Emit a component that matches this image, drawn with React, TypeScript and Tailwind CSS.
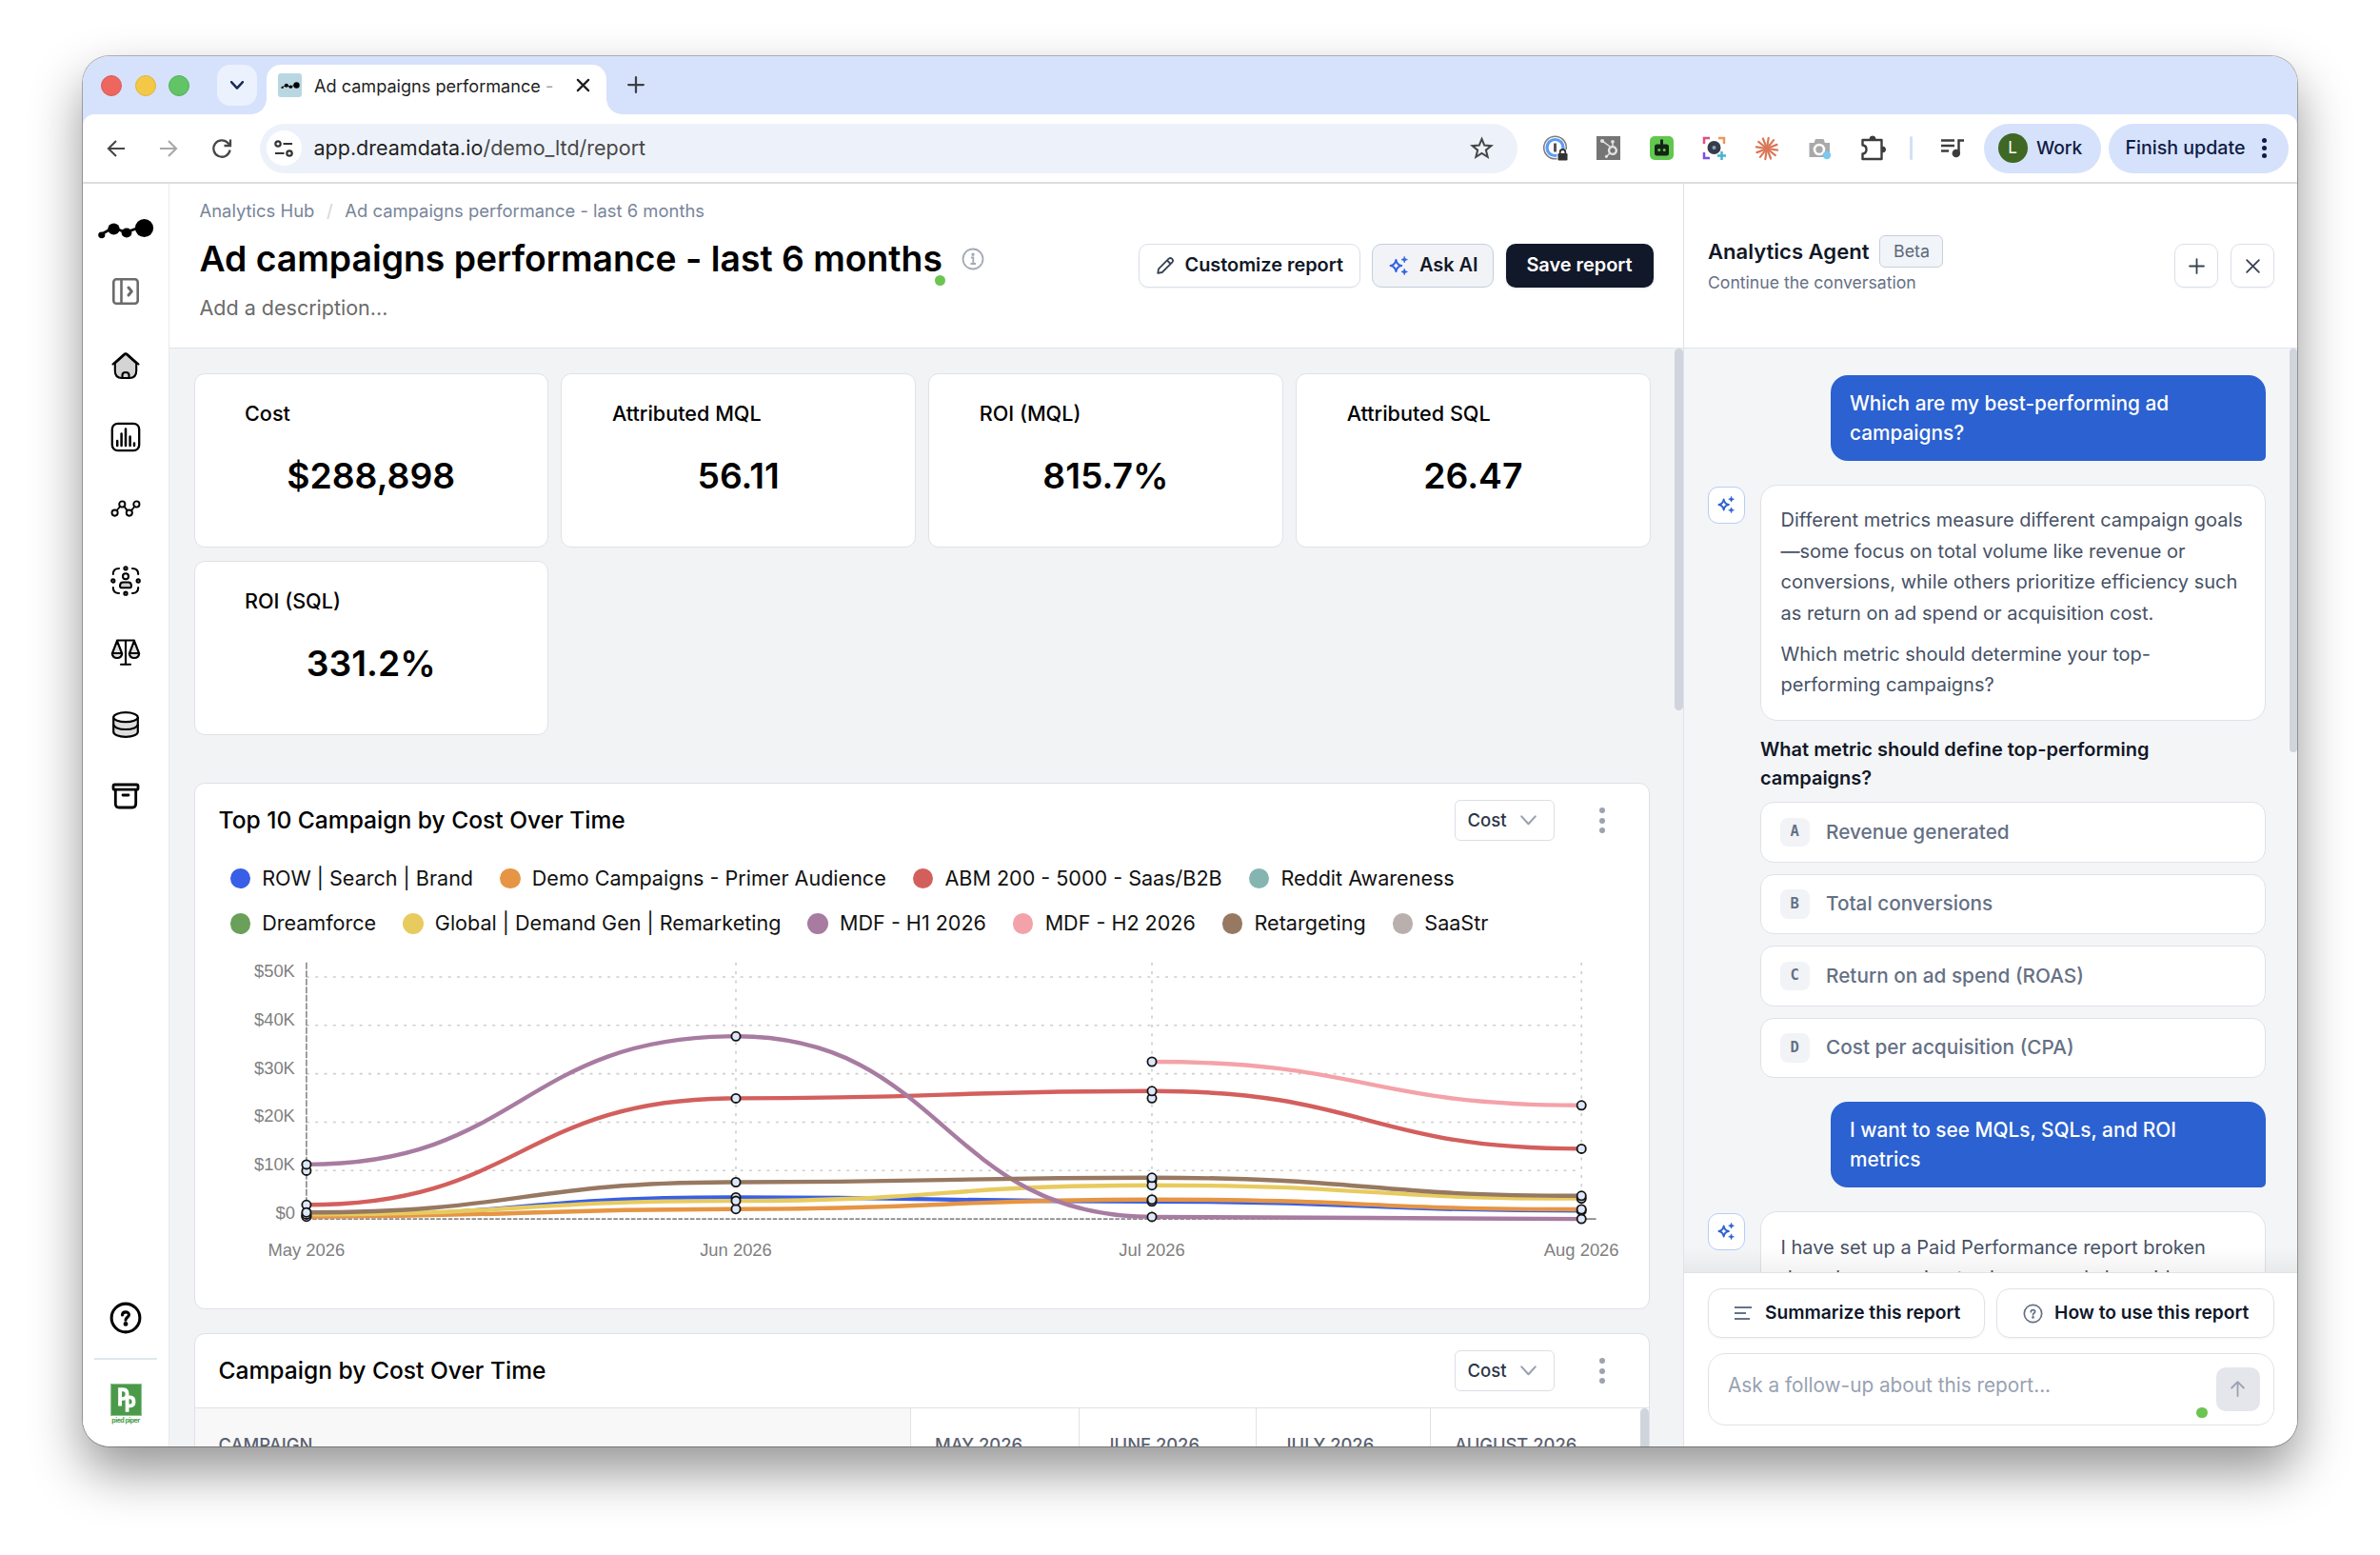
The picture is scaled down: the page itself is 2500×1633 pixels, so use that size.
import React from "react";
import { FaHubspot } from "react-icons/fa";

/* ---------- icons ---------- */
function Sparkles({ size, color }: { size: number; color: string }) {
  return (
    <svg width={size} height={size} viewBox="0 0 20 20" fill="none">
      <path d="M7.4 3.9C8 7.6 9.7 9.4 13.2 10C9.7 10.6 8 12.4 7.4 16.1C6.8 12.4 5.1 10.6 1.6 10C5.1 9.4 6.8 7.6 7.4 3.9Z" stroke={color} strokeWidth="2" strokeLinejoin="round" />
      <path d="M16.2 .4C16.6 2.4 17.4 3.2 19.4 3.6C17.4 4 16.6 4.8 16.2 6.8C15.8 4.8 15 4 13 3.6C15 3.2 15.8 2.4 16.2 .4Z" fill={color} stroke={color} strokeWidth=".8" />
      <path d="M16.2 13.2C16.6 15.2 17.4 16 19.4 16.4C17.4 16.8 16.6 17.6 16.2 19.6C15.8 17.6 15 16.8 13 16.4C15 16 15.8 15.2 16.2 13.2Z" fill={color} stroke={color} strokeWidth=".8" />
    </svg>
  );
}

function DreamLogo({ w }: { w: number }) {
  return (
    <svg width={w} height={(w * 24) / 60} viewBox="0 0 60 24" fill="#000">
      <path d="M4.5 17L17 10L30 15L47 9" stroke="#000" strokeWidth="2.6" fill="none" />
      <ellipse cx="4.8" cy="17.8" rx="3.6" ry="3.4" />
      <ellipse cx="17.5" cy="11.5" rx="6.2" ry="6" />
      <ellipse cx="31" cy="15.5" rx="5.4" ry="4.9" />
      <ellipse cx="49.5" cy="10.5" rx="9.6" ry="9.6" />
    </svg>
  );
}

function PanelIcon() {
  return (
    <svg width="30" height="30" viewBox="0 0 30 30" fill="none" stroke="#6b6b6b" strokeWidth="2.6">
      <rect x="2.3" y="2.3" width="25.4" height="25.4" rx="3" />
      <path d="M10.5 2.5V27.5" />
      <path d="M18 11L21.3 15L18 19" strokeWidth="3" strokeLinecap="round" strokeLinejoin="round" />
    </svg>
  );
}
function HomeIcon() {
  return (
    <svg width="30" height="30" viewBox="0 0 30 30" fill="none" stroke="#000" strokeWidth="2.1" strokeLinecap="round" strokeLinejoin="round">
      <path d="M3.8 12.5V20.5Q3.8 28 11 28H19Q26.2 28 26.2 20.5V12.5L15 2.5Z" fill="#d4d4d4" />
      <path d="M1.5 13.5L13.2 3Q15 1.6 16.8 3L28.5 13.5" />
      <path d="M11.5 28V24.8Q11.5 22 15 22T18.5 24.8V28" />
    </svg>
  );
}
function BarsIcon() {
  return (
    <svg width="32" height="32" viewBox="0 0 32 32" fill="none" stroke="#000" strokeWidth="2.3" strokeLinecap="round">
      <rect x="1.8" y="1.8" width="28.4" height="28.4" rx="6" />
      <path d="M7.2 20V25M11.6 12.5V25M16 7.5V25M20.6 15.5V25M25 22.5V25" strokeWidth="2.5" />
    </svg>
  );
}
function PathIcon() {
  return (
    <svg width="32" height="20" viewBox="0 0 32 20" fill="#eee" stroke="#000" strokeWidth="1.9">
      <path d="M4.5 14.5L12.3 5.5L19.8 14.5L27.5 5.5" fill="none" />
      <circle cx="4.6" cy="14.6" r="3.1" />
      <circle cx="12.3" cy="5.5" r="3.1" />
      <circle cx="19.8" cy="14.6" r="3.1" />
      <circle cx="27.4" cy="5.5" r="3.1" />
    </svg>
  );
}
function AudienceIcon() {
  return (
    <svg width="32" height="32" viewBox="0 0 32 32" fill="none" stroke="#000" strokeWidth="2.1" strokeLinecap="round">
      <path d="M2.8 9Q2.8 3 9 3M23 3Q29.2 3 29.2 9M29.2 23Q29.2 29 23 29M9 29Q2.8 29 2.8 23" />
      <circle cx="16" cy="2.8" r="1.6" />
      <circle cx="16" cy="29.2" r="1.6" />
      <circle cx="2.8" cy="16" r="1.6" />
      <circle cx="29.2" cy="16" r="1.6" />
      <circle cx="16" cy="11.3" r="3" />
      <path d="M10 21Q10.3 17.5 13 17.5H19Q21.7 17.5 22 21Q22 23.3 20 23.3H12Q10 23.3 10 21Z" fill="#d0d0d0" />
    </svg>
  );
}
function ScalesIcon() {
  return (
    <svg width="32" height="30" viewBox="0 0 32 30" fill="none" stroke="#000" strokeWidth="2.1" strokeLinecap="round" strokeLinejoin="round">
      <path d="M7 3L1.8 16.5Q2.5 21 7 21T12.2 16.5L7 3ZM25 3L19.8 16.5Q20.5 21 25 21T30.2 16.5L25 3Z" fill="#dedede" />
      <path d="M7 2.5H25M16 2.5V27.5M11 27.8H21M2 16H12M20 16H30" />
    </svg>
  );
}
function DbIcon() {
  return (
    <svg width="30" height="30" viewBox="0 0 30 30" fill="#dedede" stroke="#000" strokeWidth="2.2">
      <path d="M2.2 7V22.5C2.2 25.5 7.5 27.8 15 27.8S27.8 25.5 27.8 22.5V7" />
      <path d="M2.2 14.8C2.2 17.5 7.5 20 15 20S27.8 17.5 27.8 14.8" fill="none" />
      <ellipse cx="15" cy="7.2" rx="12.8" ry="5" fill="#fff" />
    </svg>
  );
}
function ArchiveIcon() {
  return (
    <svg width="30" height="28" viewBox="0 0 30 28" fill="none" stroke="#000" strokeWidth="2.8" strokeLinecap="round" strokeLinejoin="round">
      <rect x="2" y="2" width="26" height="5.2" rx="1.5" />
      <path d="M4.3 7.5V22Q4.3 26 8 26H22Q25.7 26 25.7 22V7.5M12 13H18" />
    </svg>
  );
}
function HelpIcon({ size, color, sw }: { size: number; color: string; sw: number }) {
  return (
    <svg width={size} height={size} viewBox="0 0 32 32" fill="none" stroke={color} strokeWidth={sw} strokeLinecap="round">
      <circle cx="16" cy="16" r="14" />
      <path d="M12.7 13.2C12.7 11.2 14.2 10.2 16 10.2S19.3 11.3 19.3 13C19.3 15.2 16 15.4 16 18" />
      <circle cx="16" cy="22" r={sw * 0.3} fill={color} />
    </svg>
  );
}
function PiedPiper() {
  return (
    <div className="flex flex-col items-center">
      <div className="flex h-[34px] w-[33px] items-center justify-center border border-[#8fc08f] bg-[#4a9a4a]">
        <svg width="29" height="30" viewBox="0 0 27 28" fill="none" stroke="#fff" strokeWidth="3.6">
          <path d="M7.5 20V4H10.5Q14.5 4 14.5 8.5T10.5 13H8" />
          <path d="M14.5 26V11.5H17.5Q21 11.5 21 15.8T17.5 20H15" />
        </svg>
      </div>
      <span className="whitespace-nowrap text-[7px] font-bold leading-[9px] tracking-[-0.5px] text-[#4a9a4a]">pied piper</span>
    </div>
  );
}
function ChevronV({ w, color, sw }: { w: number; color: string; sw: number }) {
  return (
    <svg width={w} height={(w * 10) / 16} viewBox="0 0 16 10" fill="none" stroke={color} strokeWidth={sw} strokeLinecap="round" strokeLinejoin="round">
      <path d="M1.2 1.3L8 8.7L14.8 1.3" />
    </svg>
  );
}
function CrossIcon({ size, color, sw }: { size: number; color: string; sw: number }) {
  return (
    <svg width={size} height={size} viewBox="0 0 16 16" stroke={color} strokeWidth={sw} strokeLinecap="round">
      <path d="M2 2L14 14M14 2L2 14" />
    </svg>
  );
}
function PlusIcon({ size, color, sw }: { size: number; color: string; sw: number }) {
  return (
    <svg width={size} height={size} viewBox="0 0 16 16" stroke={color} strokeWidth={sw} strokeLinecap="round">
      <path d="M8 1V15M1 8H15" />
    </svg>
  );
}

/* ---------- browser chrome ---------- */
function TabStrip() {
  return (
    <div className="flex h-[61px] items-start bg-[#d6e2fb]">
      <div className="flex h-[61px] w-[141px] items-center gap-[13.5px] pl-[19px] pt-[1px]">
        <span className="size-[22px] rounded-full border border-[#dc5a55] bg-[#ee6660]" />
        <span className="size-[22px] rounded-full border border-[#e0b43c] bg-[#f3c846]" />
        <span className="size-[22px] rounded-full border border-[#50b153] bg-[#62c466]" />
      </div>
      <div className="mt-[9px] flex h-[43px] w-[42px] items-center justify-center rounded-[14px] bg-[#ebf2fe]">
        <ChevronV w={14} color="#1b2a55" sw={2.8} />
      </div>
      <div className="relative ml-[10px] mt-[9px] flex h-[52px] w-[357px] items-center rounded-t-[15px] bg-white pb-[9px] pl-[12px] before:absolute before:-left-4 before:bottom-0 before:size-4 before:bg-[radial-gradient(circle_at_0_0,transparent_15.5px,#fff_16px)] after:absolute after:-right-4 after:bottom-0 after:size-4 after:bg-[radial-gradient(circle_at_100%_0,transparent_15.5px,#fff_16px)]">
        <span className="flex size-[25px] items-center justify-center rounded-[3px] bg-[#b9d7e2]">
          <DreamLogo w={20} />
        </span>
        <span className="ml-[13px] mt-[2px] w-[254px] whitespace-nowrap text-[18.1px] leading-none text-[#1f1f1f]">
          Ad campaigns performance <span className="text-[#a0a0a0]">-</span>
        </span>
        <span className="ml-[21px]">
          <CrossIcon size={15} color="#1f1f1f" sw={2.4} />
        </span>
      </div>
      <div className="ml-[22px] mt-[21px]">
        <PlusIcon size={18} color="#3c4043" sw={2} />
      </div>
    </div>
  );
}

function Extensions() {
  const rays = Array.from({ length: 12 }, (_, i) => (i * Math.PI) / 6 + 0.15);
  return (
    <div className="flex items-center">
      <span className="flex w-[55.5px] justify-center">
        <svg width="27" height="27" viewBox="0 0 27 27" fill="none">
          <circle cx="12.5" cy="13" r="11.8" stroke="#7d7d7d" strokeWidth="1.6" />
          <circle cx="12.5" cy="13" r="8.5" stroke="#5a9cf8" strokeWidth="3.2" />
          <path d="M12.5 8.5V17.5" stroke="#555" strokeWidth="3" />
          <path d="M14.5 27V15H27V27Z" fill="#fff" />
          <rect x="15.5" y="19" width="10" height="7.5" rx="1.2" fill="#333" />
          <path d="M17.7 19V17.8A2.8 2.8 0 0 1 23.3 17.8V19" stroke="#333" strokeWidth="1.8" />
        </svg>
      </span>
      <span className="flex w-[55.5px] justify-center">
        <span className="flex size-[25px] items-center justify-center bg-[#757575] text-[20px] text-[#e2e2e2]">
          <FaHubspot />
        </span>
      </span>
      <span className="flex w-[55.5px] justify-center">
        <svg width="25" height="25" viewBox="0 0 25 25">
          <rect width="25" height="25" rx="5" fill="#62c74f" />
          <rect x="11" y="3.5" width="3" height="6" fill="#152415" />
          <rect x="5" y="8.5" width="15" height="12" rx="2.5" fill="#152415" />
          <circle cx="9.8" cy="14.5" r="1.5" fill="#62c74f" />
          <circle cx="15.2" cy="14.5" r="1.5" fill="#62c74f" />
        </svg>
      </span>
      <span className="flex w-[55.5px] justify-center">
        <svg width="25" height="25" viewBox="0 0 25 25" fill="none" strokeWidth="2.5">
          <path d="M2 8V2H8" stroke="#e0507c" />
          <path d="M17 2H23V8" stroke="#f0945a" />
          <path d="M2 17V23H8" stroke="#7b4fe0" />
          <path d="M20.5 16V25M16 20.5H25" stroke="#45b4cf" />
          <circle cx="12.5" cy="12" r="7" fill="#363d4a" />
          <circle cx="12.5" cy="12" r="2" fill="#8ea3b8" />
        </svg>
      </span>
      <span className="flex w-[55.5px] justify-center">
        <svg width="26" height="26" viewBox="0 0 26 26" stroke="#d97757" strokeWidth="2.2" strokeLinecap="round">
          {rays.map((a, i) => (
            <path key={i} d={`M13 13L${13 + 11.3 * Math.cos(a)} ${13 + 11.3 * Math.sin(a)}`} />
          ))}
        </svg>
      </span>
      <span className="flex w-[55.5px] justify-center">
        <svg width="25" height="25" viewBox="0 0 25 25">
          <path d="M1.5 7H6.5L8 3H16.5L18 7H23V22H1.5Z" fill="#a9a9a9" />
          <circle cx="12" cy="14" r="5" fill="none" stroke="#fff" strokeWidth="2.6" />
          <circle cx="20" cy="20" r="4.2" fill="#7cc7ee" />
        </svg>
      </span>
      <span className="flex w-[55.5px] justify-center">
        <svg width="29" height="29" viewBox="0 0 29 29" fill="none" stroke="#3c3c3c" strokeWidth="2.4" strokeLinejoin="round">
          <path d="M3.5 6H23.5V26H3.5V20.5Q7.5 20.2 7.5 16T3.5 11.5Z" />
          <path d="M11 5A3 3 0 0 1 17 5ZM24.5 13A3 3 0 0 1 24.5 19Z" fill="#3c3c3c" strokeWidth="1" />
        </svg>
      </span>
    </div>
  );
}

function Toolbar() {
  return (
    <div className="bg-[#d6e2fb]">
      <div className="flex h-[71px] items-center rounded-t-[12px] bg-white">
        <svg className="ml-[25px]" width="20" height="20" viewBox="0 0 21 20" fill="none" stroke="#474747" strokeWidth="2.2">
          <path d="M20 10H2.5M10.5 1.5L2 10L10.5 18.5" />
        </svg>
        <svg className="ml-[35px]" width="20" height="20" viewBox="0 0 21 20" fill="none" stroke="#a8a8a8" strokeWidth="2.2">
          <path d="M1 10H18.5M10.5 1.5L19 10L10.5 18.5" />
        </svg>
        <svg className="ml-[34px]" width="24" height="24" viewBox="0 0 24 24" fill="none" stroke="#474747" strokeWidth="2.3">
          <path d="M20.6 13.5A8.7 8.7 0 1 1 18.6 6.3L20.6 8.5M21 2.5V9H14.5" />
        </svg>
        <div className="ml-[27.5px] flex h-[52px] w-[1321px] items-center rounded-full bg-[#edf2fa] pl-[7px] pr-[24.5px]">
          <span className="flex size-[37px] items-center justify-center rounded-full bg-white">
            <svg width="20" height="20" viewBox="0 0 20 20" fill="none" stroke="#333" strokeWidth="2.2">
              <circle cx="4" cy="5" r="2.7" />
              <path d="M9.5 5H19M1 15H10.5" />
              <circle cx="16" cy="15" r="2.7" />
            </svg>
          </span>
          <span className="ml-[13px] text-[21.5px] leading-none text-[#1f1f1f]">
            app.dreamdata.io<span className="text-[#474747]">/demo_ltd/report</span>
          </span>
          <svg className="ml-auto" width="25" height="25" viewBox="0 0 24 24" fill="none" stroke="#474747" strokeWidth="2" strokeLinejoin="miter">
            <path d="M12 2.8L14.6 9.2L21.5 9.7L16.2 14.1L17.9 20.9L12 17.2L6.1 20.9L7.8 14.1L2.5 9.7L9.4 9.2Z" />
          </svg>
        </div>
        <div className="ml-[13px]">
          <Extensions />
        </div>
        <span className="ml-[11px] h-[25px] w-[2.5px] rounded bg-[#d3e0f8]" />
        <svg className="ml-[29px]" width="25" height="21" viewBox="0 0 25 21" fill="none" stroke="#3c3c3c" strokeWidth="2.5">
          <path d="M1 2.5H15M1 8H15M1 13.5H9M19.5 15V2.5H25" />
          <circle cx="16.8" cy="16" r="3" fill="#3c3c3c" />
        </svg>
        <div className="ml-[21px] flex h-[52px] w-[123px] items-center rounded-full bg-[#d6e2fb] pl-[15px]">
          <span className="flex size-[31px] items-center justify-center rounded-full bg-[#3f6824] text-[17px] text-white">L</span>
          <span className="ml-[9.5px] mt-[1px] text-[19.2px] font-medium leading-none text-[#101b45]">Work</span>
        </div>
        <div className="ml-[8px] flex h-[52px] w-[189px] items-center rounded-full bg-[#d6e2fb] pl-[18px]">
          <span className="mt-[1px] whitespace-nowrap text-[19.6px] font-medium leading-none text-[#101b45]">Finish update</span>
          <span className="ml-[18px] flex flex-col gap-[3.5px]">
            <span className="size-[4.5px] rounded-full bg-[#101b45]" />
            <span className="size-[4.5px] rounded-full bg-[#101b45]" />
            <span className="size-[4.5px] rounded-full bg-[#101b45]" />
          </span>
        </div>
      </div>
      <div className="h-[2px] bg-[#dcdddf]" />
    </div>
  );
}

/* ---------- app ---------- */
function Sidebar() {
  const items = [HomeIcon, BarsIcon, PathIcon, AudienceIcon, ScalesIcon, DbIcon, ArchiveIcon];
  return (
    <div className="flex w-[91px] shrink-0 flex-col items-center border-r border-[#e8eaed] bg-white pb-[23px]">
      <div className="flex h-[92px] items-center pt-[3px]">
        <DreamLogo w={60} />
      </div>
      <div className="flex h-[42px] items-center">
        <PanelIcon />
      </div>
      <div className="mt-[19px] flex flex-col">
        {items.map((I, i) => (
          <div key={i} className="flex h-[75.4px] items-center justify-center">
            <I />
          </div>
        ))}
      </div>
      <div className="mt-auto">
        <HelpIcon size={34} color="#000" sw={2.9} />
      </div>
      <div className="mb-[25px] mt-[25px] h-[2px] w-[66px] bg-[#e0e6ec]" />
      <PiedPiper />
    </div>
  );
}

function Header() {
  return (
    <div className="flex h-[173px] justify-between border-b border-[#e2e4e8] bg-white pl-[31.5px] pr-[31.5px]">
      <div className="flex flex-col pt-[15px]">
        <div className="flex h-[27px] items-center text-[18.42px] leading-none text-[#78859a]">
          Analytics Hub<span className="mx-[12.7px] text-[#cfd5dd]">/</span>Ad campaigns performance - last 6 months
        </div>
        <div className="mt-[12px] flex h-[50px] items-center">
          <span className="relative text-[37.3px] font-semibold leading-none text-black">
            Ad campaigns performance - last 6 months
            <span className="absolute -right-[3px] top-[36px] size-[11px] rounded-full bg-[#6cc551]" />
          </span>
          <svg className="ml-[20px]" width="24" height="24" viewBox="0 0 24 24" fill="none" stroke="#a3a9b5" strokeWidth="1.8">
            <circle cx="12" cy="12" r="10.5" />
            <path d="M10 10.5H12.3V17M9.5 17H15" />
            <circle cx="12" cy="7.2" r=".8" fill="#a3a9b5" />
          </svg>
        </div>
        <div className="mt-[12px] flex h-[30px] items-center text-[21.5px] leading-none text-[#6b6b6b]">Add a description...</div>
      </div>
      <div className="flex gap-[12.5px] pt-[63px] text-[19.9px] font-semibold leading-none text-[#111827]">
        <div className="flex h-[46px] w-[233px] items-center rounded-[10px] border border-[#d9e0ea] bg-white pl-[17px] shadow-xs">
          <svg width="20" height="20" viewBox="0 0 20 20" fill="none" stroke="#374151" strokeWidth="1.8" strokeLinejoin="round">
            <path d="M2.2 17.8L3 13.3L13.7 2.6Q15.5 1.2 17.2 2.8T17.4 6.3L6.7 17L2.2 17.8ZM12 4.5L15.5 8" />
          </svg>
          <span className="ml-[11px] whitespace-nowrap">Customize report</span>
        </div>
        <div className="flex h-[46px] w-[128px] items-center rounded-[10px] border border-[#c3cedc] bg-[#f1f3f6] pl-[17px]">
          <Sparkles size={20} color="#2f62e2" />
          <span className="ml-[12px]">Ask AI</span>
        </div>
        <div className="flex h-[46px] w-[155px] items-center justify-center rounded-[10px] bg-[#111829] text-white shadow-sm">Save report</div>
      </div>
    </div>
  );
}

function Kpi({ label, value }: { label: string; value: string }) {
  return (
    <div className="h-[183px] rounded-[11px] border border-[#e0e2e8] bg-white">
      <div className="ml-[52.5px] mt-[27.5px] flex h-[30px] items-center text-[21.6px] font-[450] leading-none text-black">{label}</div>
      <div className="mt-[25px] flex h-[50px] items-center justify-center text-[37.3px] font-semibold leading-none text-black">{value}</div>
    </div>
  );
}

function CardHead({ title }: { title: string }) {
  return (
    <div className="flex h-[77px] items-center pl-[25px]">
      <span className="text-[24.58px] font-medium leading-none text-black">{title}</span>
      <div className="ml-auto flex h-[43px] w-[105px] items-center rounded-[6px] border border-[#dcdfe5] bg-white pl-[12.5px] text-[18.5px] font-medium leading-none text-[#2c3648]">
        Cost
        <span className="ml-[14px]">
          <ChevronV w={17} color="#9aa1af" sw={2} />
        </span>
      </div>
      <div className="ml-[46.5px] mr-[46.5px] flex flex-col gap-[4.8px]">
        <span className="size-[6px] rounded-full bg-[#9ca3af]" />
        <span className="size-[6px] rounded-full bg-[#9ca3af]" />
        <span className="size-[6px] rounded-full bg-[#9ca3af]" />
      </div>
    </div>
  );
}

const LEGEND: [string, string][][] = [
  [
    ["ROW | Search | Brand", "#385fe6"],
    ["Demo Campaigns - Primer Audience", "#e69544"],
    ["ABM 200 - 5000 - Saas/B2B", "#d35f5d"],
    ["Reddit Awareness", "#85b5b1"],
  ],
  [
    ["Dreamforce", "#6aa05a"],
    ["Global | Demand Gen | Remarketing", "#e8cb5f"],
    ["MDF - H1 2026", "#a87ba1"],
    ["MDF - H2 2026", "#f4a2a9"],
    ["Retargeting", "#977861"],
    ["SaaStr", "#b9afac"],
  ],
];

const X = [321.7, 772.8, 1209.8, 1661];
const SERIES: { c: string; y: (number | null)[] }[] = [
  { c: "#385fe6", y: [1276.5, 1257, 1261.4, 1271] },
  { c: "#e69544", y: [1277.3, 1269.3, 1259.3, 1269.6] },
  { c: "#d35f5d", y: [1264.9, 1153, 1145.4, 1206] },
  { c: "#e8cb5f", y: [1275, 1260.7, 1244.3, 1258.2] },
  { c: "#a87ba1", y: [1222.5, 1087.9, 1277.5, 1279.7] },
  { c: "#f4a2a9", y: [null, null, 1114.6, 1160.4] },
  { c: "#977861", y: [1272.8, 1241.1, 1236.4, 1255.4] },
];
/* months with a single reading and no joining line */
const LONE: [number, number][] = [
  [0, 1229],
  [2, 1152.9],
  [2, 1239.5],
];

function curve(y: (number | null)[]) {
  let d = "";
  y.forEach((v, i) => {
    if (v === null) return;
    const p = i > 0 ? y[i - 1] : null;
    if (p === null) d += `M${X[i]} ${v}`;
    else {
      const m = (X[i] + X[i - 1]) / 2;
      d += `C${m} ${p} ${m} ${v} ${X[i]} ${v}`;
    }
  });
  return d;
}

function Chart() {
  return (
    <svg className="block" width="1526" height="380" viewBox="204.8 993.6 1526 380" fontFamily="'Liberation Sans', Arial, sans-serif" fontSize="18.4" fill="#808080">
      {["$50K", "$40K", "$30K", "$20K", "$10K", "$0"].map((t, i) => (
        <g key={t}>
          {i < 5 && <path d={`M${X[0]} ${1025.6 + i * 50.82}H${X[3]}`} stroke="#cdcdcd" strokeWidth="1.6" strokeDasharray="3 6.3" />}
          <text x="309.7" y={1025.6 + i * 50.82} textAnchor="end">
            {t}
          </text>
        </g>
      ))}
      {X.slice(1).map((x) => (
        <path key={x} d={`M${x} 1010.4V1279.7`} stroke="#cdcdcd" strokeWidth="1.6" strokeDasharray="3 6.3" />
      ))}
      <path d="M321.7 1010.4V1279.7" stroke="#777" strokeWidth="1.4" strokeDasharray="7 1.5" />
      <path d="M321.7 1279.7H1661" stroke="#8a8a8a" strokeWidth="1.8" strokeDasharray="4.6 1.6" />
      <path d="M1661 1279.7H1676.4" stroke="#8a8a8a" strokeWidth="1.8" />
      {SERIES.map((s) => (
        <path key={s.c} d={curve(s.y)} fill="none" stroke={s.c} strokeWidth="4.4" />
      ))}
      {[...LONE, ...SERIES.flatMap((s) => s.y.flatMap((v, i): [number, number][] => (v === null ? [] : [[i, v]])))].map(([i, v], k) => (
        <circle key={k} cx={X[i]} cy={v} r="4.6" fill="#dde8fb" stroke="#141414" strokeWidth="1.8" />
      ))}
      {["May 2026", "Jun 2026", "Jul 2026", "Aug 2026"].map((t, i) => (
        <text key={t} x={X[i]} y="1318.4" textAnchor="middle">
          {t}
        </text>
      ))}
    </svg>
  );
}

function Content() {
  return (
    <div className="relative flex-1 overflow-hidden bg-[#f2f3f5] pl-[25.5px] pt-[25.5px]">
      <div className="grid w-[1530px] grid-cols-4 gap-x-[13.5px] gap-y-[14px]">
        <Kpi label="Cost" value="$288,898" />
        <Kpi label="Attributed MQL" value="56.11" />
        <Kpi label="ROI (MQL)" value="815.7%" />
        <Kpi label="Attributed SQL" value="26.47" />
        <Kpi label="ROI (SQL)" value="331.2%" />
      </div>
      <div className="mt-[50.5px] h-[553px] w-[1529.5px] overflow-hidden rounded-[11px] border border-[#dfe1e7] bg-white">
        <CardHead title="Top 10 Campaign by Cost Over Time" />
        <div className="-mt-[1.5px] pl-[37px] text-[21.55px] leading-none text-[#111]">
          {LEGEND.map((row, r) => (
            <div key={r} className="flex h-[47.6px] items-center gap-[28px]">
              {row.map(([t, c]) => (
                <span key={t} className="flex items-center gap-[12.2px] whitespace-nowrap">
                  <span className="size-[21.5px] rounded-full" style={{ background: c }} />
                  {t}
                </span>
              ))}
            </div>
          ))}
        </div>
        <Chart />
      </div>
      <div className="relative mt-[25px] h-[300px] w-[1529.5px] overflow-hidden rounded-t-[11px] border border-[#dfe1e7] bg-white">
        <CardHead title="Campaign by Cost Over Time" />
        <div className="flex h-[90px] border-t border-[#dfe1e7] text-[18.35px] font-medium leading-[77px] text-[#5a6070]">
          <div className="w-[751.5px] bg-[#f8f8f8] pl-[25px]">CAMPAIGN</div>
          <div className="w-[177px] border-l border-[#e0e2e7] pl-[25px]">MAY 2026</div>
          <div className="w-[186px] border-l border-[#e0e2e7] pl-[26px]">JUNE 2026</div>
          <div className="w-[183px] border-l border-[#e0e2e7] pl-[26px]">JULY 2026</div>
          <div className="border-l border-[#e0e2e7] pl-[25px]">AUGUST 2026</div>
        </div>
        <span className="absolute right-0 top-[78px] h-[200px] w-[9px] rounded-full bg-[#d0d4dd]" />
      </div>
      <span className="absolute right-0 top-0 h-[380px] w-[9px] rounded-full bg-[#d0d4dd]" />
    </div>
  );
}

function UserBubble({ children }: { children: React.ReactNode }) {
  return (
    <div className="ml-auto w-[457px] rounded-[18px] rounded-br-[5px] bg-[#2b61d0] px-[20px] pb-[14.5px] pt-[13.5px] text-[20.8px] font-[450] leading-[31.2px] text-white">
      {children}
    </div>
  );
}
function BotAvatar() {
  return (
    <div className="mt-[1.5px] flex size-[39.5px] shrink-0 items-center justify-center rounded-[11px] border border-[#b7cdf6] bg-white">
      <Sparkles size={18} color="#2b61d0" />
    </div>
  );
}

function Agent() {
  return (
    <div className="flex w-[645px] shrink-0 flex-col border-l border-[#dfe2e6]">
      <div className="flex h-[173px] border-b border-[#e2e4e8] bg-white pl-[25px] pr-[24px]">
        <div className="pt-[54px]">
          <div className="flex h-[34px] items-center">
            <span className="text-[22.07px] font-semibold leading-none text-[#111827]">Analytics Agent</span>
            <span className="ml-[11px] flex h-[34px] w-[67px] items-center justify-center rounded-[6px] border border-[#c6cfda] bg-[#f1f4f8] text-[17.83px] leading-none text-[#5d687a]">Beta</span>
          </div>
          <div className="mt-[3px] flex h-[26px] items-center text-[17.62px] leading-none text-[#667085]">Continue the conversation</div>
        </div>
        <div className="ml-auto flex gap-[13px] pt-[63px]">
          <span className="flex size-[46px] items-center justify-center rounded-[10px] border border-[#dae1ea] shadow-xs">
            <PlusIcon size={17} color="#374151" sw={1.7} />
          </span>
          <span className="flex size-[46px] items-center justify-center rounded-[10px] border border-[#dae1ea] shadow-xs">
            <CrossIcon size={17} color="#374151" sw={1.7} />
          </span>
        </div>
      </div>
      <div className="relative h-[970px] overflow-hidden bg-[#f4f5f7] pl-[24.5px] pr-[33px] pt-[28px]">
        <UserBubble>Which are my best-performing ad campaigns?</UserBubble>
        <div className="mt-[24.6px] flex justify-between">
          <BotAvatar />
          <div className="w-[531px]">
            <div className="rounded-[18px] border border-[#dfe2e8] bg-white pb-[19.8px] pl-[20.5px] pt-[20.3px] text-[20px] leading-[32.5px] text-[#475266]">
              <p>
                Different metrics measure different campaign goals
                <br />
                —some focus on total volume like revenue or
                <br />
                conversions, while others prioritize efficiency such
                <br />
                as return on ad spend or acquisition cost.
              </p>
              <p className="mt-[10.5px]">
                Which metric should determine your top-
                <br />
                performing campaigns?
              </p>
            </div>
            <div className="mt-[15px] text-[19.98px] font-semibold leading-[30px] text-[#111827]">
              What metric should define top-performing
              <br />
              campaigns?
            </div>
            <div className="mt-[10.5px] flex flex-col gap-[11.8px]">
              {[
                ["A", "Revenue generated"],
                ["B", "Total conversions"],
                ["C", "Return on ad spend (ROAS)"],
                ["D", "Cost per acquisition (CPA)"],
              ].map(([k, t]) => (
                <div key={k} className="flex h-[63.7px] items-center rounded-[14px] border border-[#dfe2e8] bg-white pl-[20px]">
                  <span className="flex size-[30.5px] items-center justify-center rounded-[8px] bg-[#f1f3f7] font-['DejaVu_Sans_Mono',monospace] text-[15.5px] font-bold leading-none text-[#657085]">{k}</span>
                  <span className="ml-[17.5px] text-[20.75px] font-[450] leading-none text-[#657085]">{t}</span>
                </div>
              ))}
            </div>
          </div>
        </div>
        <div className="mt-[24.8px]">
          <UserBubble>I want to see MQLs, SQLs, and ROI metrics</UserBubble>
        </div>
        <div className="mt-[24.6px] flex justify-between">
          <BotAvatar />
          <div className="w-[531px] rounded-[18px] border border-[#dfe2e8] bg-white pb-[20px] pl-[20.5px] pt-[20.5px] text-[20px] leading-[32.5px] text-[#475266]">
            I have set up a Paid Performance report broken
            <br />
            down by campaign to show spend alongside
          </div>
        </div>
        <div className="absolute inset-x-0 bottom-0 h-[26px] bg-linear-to-t from-black/5 to-transparent" />
        <span className="absolute right-0 top-0 h-[424px] w-[8.5px] rounded-full bg-[#d0d4dd]" />
      </div>
      <div className="flex-1 border-t border-[#dfe2e7] bg-white pl-[25px] pr-[24.5px] pt-[16px]">
        <div className="flex gap-[11.7px] text-[19.2px] font-semibold leading-none text-[#0f172a]">
          <div className="flex h-[52px] flex-1 items-center rounded-[14px] border border-[#dfe2e8] pl-[27px] shadow-xs">
            <svg width="18" height="16" viewBox="0 0 18 16" stroke="#64748b" strokeWidth="2">
              <path d="M0 2H18M0 8H12M0 14H16" />
            </svg>
            <span className="ml-[14px] whitespace-nowrap">Summarize this report</span>
          </div>
          <div className="flex h-[52px] flex-1 items-center rounded-[14px] border border-[#dfe2e8] pl-[27px] shadow-xs">
            <HelpIcon size={21} color="#667085" sw={2.6} />
            <span className="ml-[12px] whitespace-nowrap">How to use this report</span>
          </div>
        </div>
        <div className="relative mt-[16px] flex h-[76px] items-start rounded-[18px] border border-[#dfe2e8] pl-[20px] pr-[14px] pt-[13.5px]">
          <span className="pt-[9px] text-[20.76px] leading-none text-[#98a2b3]">Ask a follow-up about this report...</span>
          <span className="ml-auto flex size-[46px] items-center justify-center rounded-[10px] bg-[#e4e6eb]">
            <svg width="15" height="17" viewBox="0 0 15 17" fill="none" stroke="#98a2b3" strokeWidth="1.8" strokeLinecap="round" strokeLinejoin="round">
              <path d="M7.5 16V1.5M1.2 7.5L7.5 1.2L13.8 7.5" />
            </svg>
          </span>
          <span className="absolute bottom-[7px] right-[69px] size-[11.5px] rounded-full bg-[#6cc551]" />
        </div>
      </div>
    </div>
  );
}

export default function App() {
  return (
    <div className="h-[1633px] w-[2500px] overflow-hidden bg-white pl-[87px] pt-[59px] font-['Inter',sans-serif] antialiased">
      <div className="h-[1460px] w-[2326px] rounded-[28px] shadow-[0_0_0_1px_rgba(0,0,0,0.28),0_26px_54px_rgba(0,0,0,0.42)]">
        <div className="flex h-full flex-col overflow-hidden rounded-[28px]">
          <TabStrip />
          <Toolbar />
          <div className="flex min-h-0 flex-1">
            <Sidebar />
            <div className="flex min-w-0 flex-1 flex-col">
              <Header />
              <Content />
            </div>
            <Agent />
          </div>
        </div>
      </div>
    </div>
  );
}
